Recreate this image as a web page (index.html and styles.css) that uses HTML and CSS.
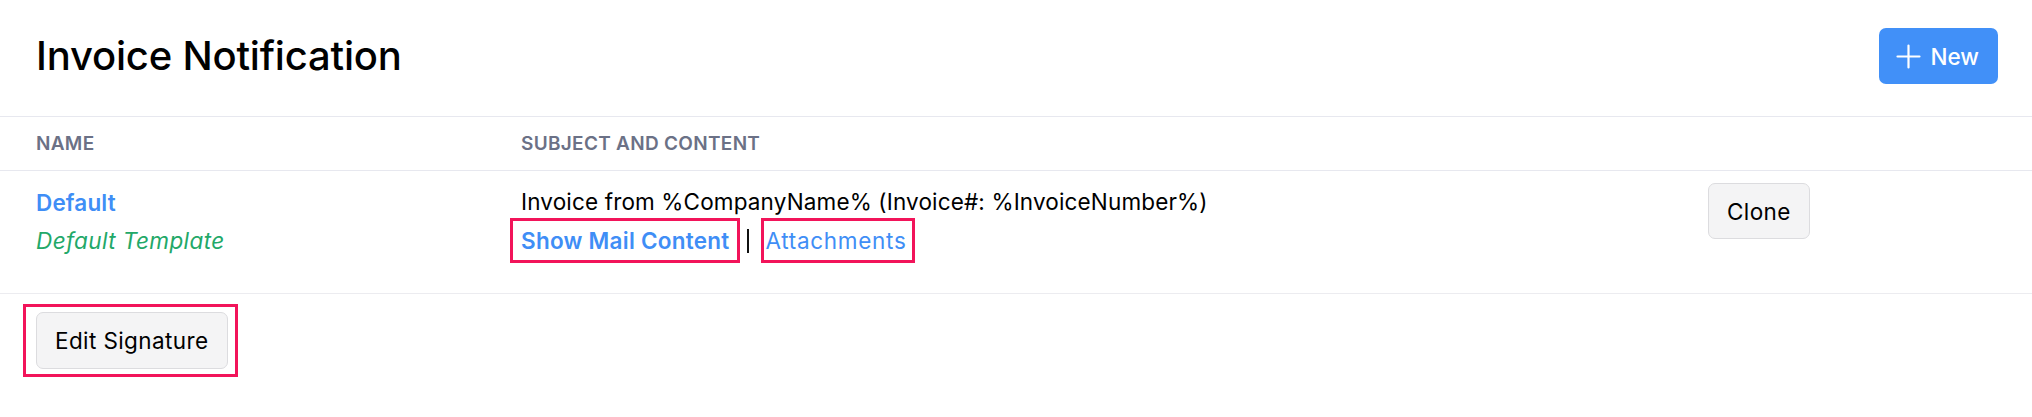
FILE: index.html
```html
<!DOCTYPE html>
<html lang="en">
<head>
  <meta charset="UTF-8">
  <meta name="viewport" content="width=device-width, initial-scale=1.0">
  <title>Invoice Notification</title>
  <link rel="stylesheet" href="styles.css">
</head>
<body>
  <header class="page-head">
    <h1>Invoice Notification</h1>
    <button class="btn-new">
      <svg width="25" height="25" viewBox="0 0 25 25" fill="none" stroke="#fff" stroke-width="2.2" stroke-linecap="round">
        <path d="M12.5 1.5v22M1.5 12.5h22"/>
      </svg>
      <span>New</span>
    </button>
  </header>

  <div class="grid thead">
    <div>Name</div>
    <div>Subject and Content</div>
    <div></div>
  </div>

  <div class="grid trow">
    <div class="cell text-cell">
      <a class="tpl-name" href="#">Default</a>
      <div class="tpl-note">Default Template</div>
    </div>
    <div class="cell text-cell">
      <div class="subject">Invoice from %CompanyName% (Invoice#: %InvoiceNumber%)</div>
      <div class="links">
        <span class="mark mark-first"><a class="strong" href="#">Show Mail Content</a></span>
        <span class="sep"></span>
        <span class="mark mark-second"><a href="#">Attachments</a></span>
      </div>
    </div>
    <div class="cell">
      <button class="btn">Clone</button>
    </div>
  </div>

  <div class="footer">
    <span class="mark mark-btn"><button class="btn">Edit Signature</button></span>
  </div>
</body>
</html>
```

FILE: styles.css
```css
body { margin: 0; font-family: Inter, "Noto Sans", sans-serif; color: #000; background: #fff; }
a { text-decoration: none; color: #3f8ef6; }

.page-head { display: flex; align-items: center; justify-content: space-between; height: 116px; padding: 0 34px 0 36px; border-bottom: 1px solid #e7e8ef; }
.page-head h1 { margin: -5px 0 0; font-size: 40px; font-weight: 500; letter-spacing: -0.2px; }

.btn-new { display: flex; align-items: center; gap: 9px; height: 56px; padding: 0 19px 0 17px; margin-top: -4px; border: 0; border-radius: 7px; background: #4190f8; color: #fff; font: 500 22.5px Inter, sans-serif; }

.grid { display: grid; grid-template-columns: 485px 1187px 1fr; padding-left: 36px; }
.thead { height: 53px; align-items: center; border-bottom: 1px solid #e7e8ef; font-size: 19px; font-weight: 600; letter-spacing: 0.3px; color: #6b7186; text-transform: uppercase; }
.trow { padding: 12px 0 30px 36px; border-bottom: 1px solid #ececf0; font-size: 22.5px; letter-spacing: 0.15px; }
.text-cell { padding-top: 3px; }

.tpl-name { display: block; line-height: 34px; font-weight: 600; }
.tpl-note { line-height: 41px; font-style: italic; letter-spacing: 0.4px; color: #22a868; }

.subject { line-height: 32px; }
.links { display: flex; align-items: center; margin-left: -11px; }
.links a { line-height: 39px; }
.links .strong { font-weight: 600; letter-spacing: 0.25px; }
.sep { width: 2px; height: 24px; background: #111; margin: 0 12px 0 7px; }

.mark { display: inline-block; border: 3px solid #f2145a; }
.mark-first { padding: 0 8px; }
.mark-second { padding: 0 6px 0 1px; }
.mark-second a { letter-spacing: 0.7px; }
.mark-btn { padding: 5px 7px 5px 10px; }

.btn { height: 56px; padding: 0 18px; border: 1px solid #dcdcdf; border-radius: 7px; background: #f4f4f5; color: #000; font: 400 22.5px Inter, sans-serif; letter-spacing: 0.4px; }

.footer { padding: 10px 0 0 23px; }
.footer .btn { height: 57px; display: block; }
```
